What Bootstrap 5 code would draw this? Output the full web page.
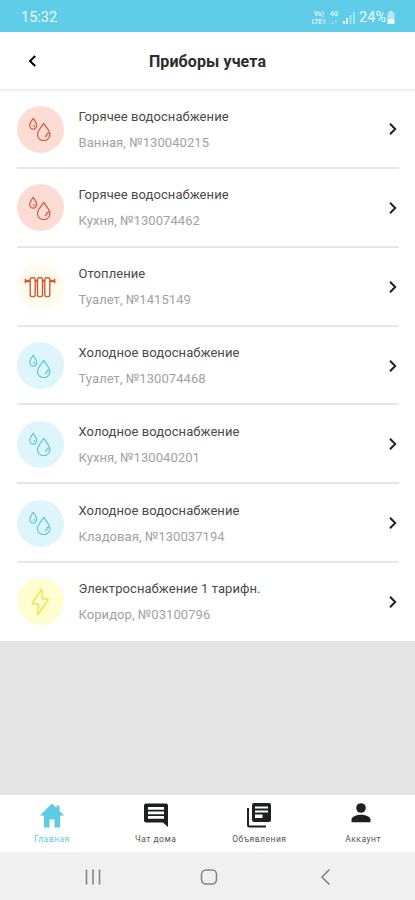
<!DOCTYPE html>
<html lang="ru">
<head>
<meta charset="utf-8">
<meta name="viewport" content="width=device-width, initial-scale=1">
<title>Приборы учета</title>
<link href="https://cdn.jsdelivr.net/npm/bootstrap@5.3.0/dist/css/bootstrap.min.css" rel="stylesheet">
<style>
body{font-family:Roboto,"Liberation Sans",sans-serif;background:#e5e5e5;color:#222}
.screen{height:900px;max-width:415px}
.status{height:32px;background:#5fcde8;color:#e9fafd;font-size:14.5px;padding:3px 19px 0 21px}
.net{font-size:6.5px;line-height:8px;font-weight:700;opacity:.85}
.topbar{height:59px;border-bottom:2px solid #f0f0f0;display:grid;grid-template-columns:65px 1fr 65px}
.topbar h1{font-size:16px;font-weight:700;letter-spacing:.1px;color:#2c2c2c;padding-top:2px}
.meters{padding:0 16px 0 17px;height:550px}
.meter{height:78.83px;border-bottom:2px solid #e6e6e6;padding-top:1px}
.meter:first-child{height:78px;padding-top:0}
.meter:last-child{border-bottom-color:transparent;height:78.500px}
.disc{width:47px;height:47px;margin-right:15px;margin-left:-.5px}
.hot{background:#fcdcd4;color:#da5a38}
.heat{background:#fffbee;color:#d4582f}
.cold{background:#dff5fc;color:#5cc9dc}
.power{background:#fffed0;color:#ece645}
.kind{font-size:13px;line-height:16px;letter-spacing:.07px;color:#4a4a4a;padding-top:1px}
.place{font-size:13px;line-height:16px;letter-spacing:.07px;color:#a2a2a2;margin-top:10px}
.meter>svg{margin-right:1px}
.tabs{height:57px;color:#222}
.tabs a{width:103.75px;font-size:8.500px;line-height:10px;letter-spacing:.5px;color:#555;padding-top:7px}
.tabs a:last-child svg{margin-right:4px}
.tabs svg{color:#1d1f20;margin-bottom:6px}
.tabs a.active,.tabs a.active svg{color:#5dcbe1}
.sysbar{height:48px;background:#f0f0f0;color:#858585}
</style>
<script src="https://cdn.jsdelivr.net/npm/bootstrap@5.3.0/dist/js/bootstrap.bundle.min.js"></script>
</head>
<body>
<svg class="d-none">
<symbol id="drops" viewBox="0 0 24 24" fill="none" stroke="currentColor" stroke-width="1.25" stroke-linejoin="round"><path d="M5.200 1.300C4.200 3.300 1.700 5.500 1.700 8.500a3.500 3.500 0 0 0 7 0C8.700 5.500 6.200 3.300 5.200 1.300Z"/><path d="M15.700 6.300c-2 3.800-6.200 7-6.200 11.200a6.200 6.200 0 0 0 12.400 0c0-4.200-4.200-7.400-6.200-11.200Z"/><path d="M21.500 16.300h-2.200a3.500 3.500 0 0 1-2.300 3.300M6.500 8a1.500 1.500 0 0 1-1.200 1.500"/></symbol>
<symbol id="radiator" viewBox="0 0 32 24" fill="none" stroke="currentColor" stroke-width="1.400"><path d="M1 6h5M26 6h5M11 6h2.500M18.500 6H21" stroke-width="2.400"/><path d="M1.300 4v4.200M30.700 4v4.200"/><rect x="6.200" y="2.800" width="5" height="18.800" rx="1.800"/><rect x="13.500" y="2.800" width="5" height="18.800" rx="1.800"/><rect x="20.800" y="2.800" width="5" height="18.800" rx="1.800"/></symbol>
<symbol id="bolt" viewBox="0 0 24 30" fill="none" stroke="currentColor" stroke-width="1.400" stroke-linejoin="round"><path d="M13.700 2 4 16.500l6.500 1-1 10.500L20.400 12.500l-6.200-1L13.700 2Z"/></symbol>
<symbol id="next" viewBox="0 0 10 14" fill="none" stroke="currentColor" stroke-width="2"><path d="m2 1.800 5.200 5.200L2 12.200"/></symbol>
</svg>
<div class="screen d-flex flex-column mx-auto">
<header class="status d-flex align-items-center justify-content-between">
<span>15:32</span>
<div class="d-flex align-items-center">
<div class="net text-center me-1"><div>Vo)</div><div>LTE1</div></div><div class="net text-center me-1"><div>4G</div><div>↓↑</div></div>
<svg class="me-1" width="13" height="12" viewBox="0 0 13 12" fill="currentColor"><path d="M1 9h2v3H1zM4 6h2v6H4z"/><path opacity=".5" d="M7.500 3h2v9h-2zM11 0h2v12h-2z"/></svg>
<span>24%</span>
<svg width="10" height="13" viewBox="0 0 9 13" fill="currentColor"><path d="M3 0h3v1.500H3z"/><path opacity=".6" d="M1 1.500h7V8H1z"/><path d="M1 8h7v5H1z"/></svg>
</div>
</header>
<div class="topbar bg-white align-items-center">
<svg class="ms-4 text-black" width="16" height="14" viewBox="0 0 16 14" fill="none" stroke="currentColor" stroke-width="2"><path d="m11.200 2-5.200 5 5.200 5"/></svg>
<h1 class="m-0 text-center">Приборы учета</h1>
</div>
<main class="meters bg-white">
<div class="meter d-flex align-items-center"><div class="disc hot rounded-circle d-flex align-items-center justify-content-center flex-shrink-0"><svg width="24" height="24"><use href="#drops"/></svg></div><div class="flex-grow-1"><div class="kind">Горячее водоснабжение</div><div class="place">Ванная, №130040215</div></div><svg width="10" height="14"><use href="#next"/></svg></div>
<div class="meter d-flex align-items-center"><div class="disc hot rounded-circle d-flex align-items-center justify-content-center flex-shrink-0"><svg width="24" height="24"><use href="#drops"/></svg></div><div class="flex-grow-1"><div class="kind">Горячее водоснабжение</div><div class="place">Кухня, №130074462</div></div><svg width="10" height="14"><use href="#next"/></svg></div>
<div class="meter d-flex align-items-center"><div class="disc heat rounded-circle d-flex align-items-center justify-content-center flex-shrink-0"><svg width="32" height="24"><use href="#radiator"/></svg></div><div class="flex-grow-1"><div class="kind">Отопление</div><div class="place">Туалет, №1415149</div></div><svg width="10" height="14"><use href="#next"/></svg></div>
<div class="meter d-flex align-items-center"><div class="disc cold rounded-circle d-flex align-items-center justify-content-center flex-shrink-0"><svg width="24" height="24"><use href="#drops"/></svg></div><div class="flex-grow-1"><div class="kind">Холодное водоснабжение</div><div class="place">Туалет, №130074468</div></div><svg width="10" height="14"><use href="#next"/></svg></div>
<div class="meter d-flex align-items-center"><div class="disc cold rounded-circle d-flex align-items-center justify-content-center flex-shrink-0"><svg width="24" height="24"><use href="#drops"/></svg></div><div class="flex-grow-1"><div class="kind">Холодное водоснабжение</div><div class="place">Кухня, №130040201</div></div><svg width="10" height="14"><use href="#next"/></svg></div>
<div class="meter d-flex align-items-center"><div class="disc cold rounded-circle d-flex align-items-center justify-content-center flex-shrink-0"><svg width="24" height="24"><use href="#drops"/></svg></div><div class="flex-grow-1"><div class="kind">Холодное водоснабжение</div><div class="place">Кладовая, №130037194</div></div><svg width="10" height="14"><use href="#next"/></svg></div>
<div class="meter d-flex align-items-center"><div class="disc power rounded-circle d-flex align-items-center justify-content-center flex-shrink-0"><svg width="24" height="30"><use href="#bolt"/></svg></div><div class="flex-grow-1"><div class="kind">Электроснабжение 1 тарифн.</div><div class="place">Коридор, №03100796</div></div><svg width="10" height="14"><use href="#next"/></svg></div>
</main>
<nav class="tabs bg-white d-flex mt-auto">
<a class="active d-flex flex-column align-items-center text-decoration-none" href="#"><svg width="26" height="26" viewBox="0 0 26 26" fill="currentColor"><path d="M13 1.500.900 13.500h4V25.500h5.600v-8h5v8h5.600v-12h4L20.500 9V3.500h-3V6Z"/></svg>Главная</a>
<a class="d-flex flex-column align-items-center text-decoration-none" href="#"><svg width="26" height="26" viewBox="0 0 26 26"><path fill="currentColor" fill-rule="evenodd" d="M3 1.500h20a2 2 0 0 1 2 2V25l-5-4.500H3a2 2 0 0 1-2-2v-15a2 2 0 0 1 2-2ZM5 5v2.700h16V5Zm0 4.500v2.700h16V9.500ZM5 14v2.700h16V14Z"/></svg>Чат дома</a>
<a class="d-flex flex-column align-items-center text-decoration-none" href="#"><svg width="26" height="26" viewBox="0 0 26 26"><path fill="currentColor" fill-rule="evenodd" d="M8 1h15a2 2 0 0 1 2 2v15a2 2 0 0 1-2 2H8a2 2 0 0 1-2-2V3a2 2 0 0 1 2-2Zm1 3.500v2h13v-2Zm0 4v2h13v-2Zm0 4V16h7.500v-3.500Z"/><path d="M2 6v17a1.500 1.500 0 0 0 1.500 1.500H20" fill="none" stroke="currentColor" stroke-width="2"/></svg>Объявления</a>
<a class="d-flex flex-column align-items-center text-decoration-none" href="#"><svg width="26" height="26" viewBox="0 0 26 26" fill="currentColor"><circle cx="13" cy="6" r="4.800"/><path d="M3.500 20.300v-2.500c0-3.300 5.500-5 9.500-5s9.500 1.700 9.500 5v2.500Z"/></svg>Аккаунт</a>
</nav>
<footer class="sysbar d-flex justify-content-center align-items-center">
<svg width="260" height="24" viewBox="0 0 260 24" fill="none" stroke="currentColor" stroke-width="1.600"><path d="M8.500 5.500v15M15 5.500v15M21.500 5.500v15"/><rect x="123.500" y="6" width="15" height="14" rx="4.500"/><path d="m251.500 5.500-7.500 7.500 7.500 7.500"/></svg>
</footer>
</div>
</body>
</html>
